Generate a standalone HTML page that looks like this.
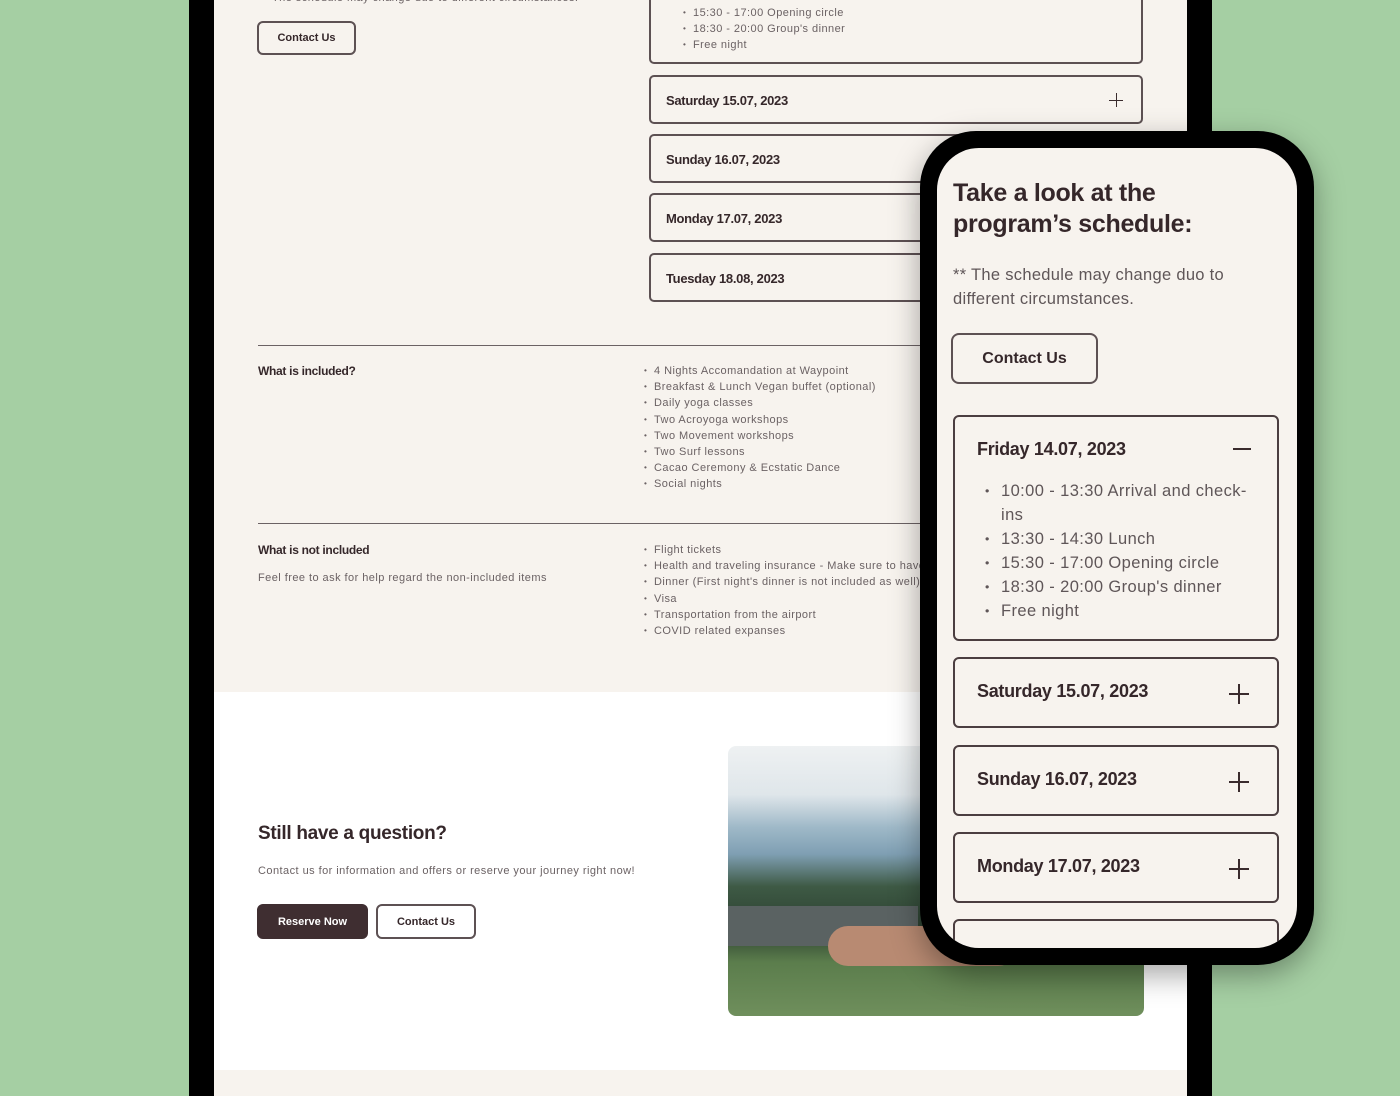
<!DOCTYPE html>
<html><head><meta charset="utf-8"><style>
*{margin:0;padding:0;box-sizing:border-box}
body{width:1400px;height:1096px;background:#a5cfa3;position:relative;overflow:hidden;font-family:"Liberation Sans",sans-serif;color:#3a2b2d}
.a{position:absolute}
.b{font-weight:bold;letter-spacing:-0.3px;color:#35272a}
.t{color:#6b6264;font-size:11px;letter-spacing:0.45px}
.acc{position:absolute;border:2px solid #5d5153;border-radius:5px;background:#f7f3ee}
.acc .b{position:absolute;left:15px;font-size:13px}
.plus{position:absolute;width:14px;height:14px}
.plus:before,.plus:after{content:"";position:absolute;background:#3a2b2d}
.plus:before{left:0;right:0;top:6.5px;height:1.4px}
.plus:after{top:0;bottom:0;left:6.5px;width:1.4px}
ul{list-style:none}
li{position:relative;padding-left:10px}
li:before{content:"•";position:absolute;left:0;font-size:0.75em}
.btn{position:absolute;border:2px solid #5d5153;border-radius:6px;font-weight:bold;font-size:11px;display:flex;align-items:center;justify-content:center;color:#35272a}
.macc{position:absolute;left:16px;width:326px;border:2px solid #4b3e40;border-radius:6px;height:71px}
.macc .b{position:absolute;left:22px;top:22px;font-size:18px}
.macc .plus{width:20px;height:20px;right:28px;top:25px}
.macc .plus:before{top:9px;height:2px}
.macc .plus:after{left:9px;width:2px}
</style></head><body>
<div class="a" style="left:189px;top:0;width:1023px;height:1096px;background:#000"></div>
<div class="a" style="left:214px;top:0;width:973px;height:692px;background:#f7f3ee"></div>
<div class="a" style="left:214px;top:692px;width:973px;height:378px;background:#fff"></div>
<div class="a" style="left:214px;top:1070px;width:973px;height:26px;background:#f7f3ee"></div>

<div class="a t" style="left:272px;top:-8px">The schedule may change duo to different circumstances.</div>
<div class="btn" style="left:257px;top:21px;width:99px;height:34px">Contact Us</div>

<div class="acc" style="left:649px;top:-10px;width:494px;height:74px">
<ul class="t" style="position:absolute;left:32px;top:13px;line-height:16px"><li>15:30 - 17:00 Opening circle</li><li>18:30 - 20:00 Group's dinner</li><li>Free night</li></ul></div>
<div class="acc" style="left:649px;top:75px;width:494px;height:49px"><div class="b" style="top:16px">Saturday 15.07, 2023</div><div class="plus" style="right:18px;top:16px"></div></div>
<div class="acc" style="left:649px;top:134px;width:494px;height:49px"><div class="b" style="top:16px">Sunday 16.07, 2023</div></div>
<div class="acc" style="left:649px;top:193px;width:494px;height:49px"><div class="b" style="top:16px">Monday 17.07, 2023</div></div>
<div class="acc" style="left:649px;top:253px;width:494px;height:49px"><div class="b" style="top:16px">Tuesday 18.08, 2023</div></div>

<div class="a" style="left:258px;top:345px;width:885px;height:1px;background:#6b6264"></div>
<div class="a b" style="left:258px;top:364px;font-size:12px">What is included?</div>
<ul class="a t" style="left:644px;top:363px;line-height:16.2px"><li>4 Nights Accomandation at Waypoint</li><li>Breakfast &amp; Lunch Vegan buffet (optional)</li><li>Daily yoga classes</li><li>Two Acroyoga workshops</li><li>Two Movement workshops</li><li>Two Surf lessons</li><li>Cacao Ceremony &amp; Ecstatic Dance</li><li>Social nights</li></ul>
<div class="a" style="left:258px;top:523px;width:885px;height:1px;background:#6b6264"></div>
<div class="a b" style="left:258px;top:543px;font-size:12px">What is not included</div>
<div class="a t" style="left:258px;top:572px">Feel free to ask for help regard the non-included items</div>
<ul class="a t" style="left:644px;top:542px;line-height:16.2px;white-space:nowrap"><li>Flight tickets</li><li>Health and traveling insurance - Make sure to have</li><li>Dinner (First night's dinner is not included as well)</li><li>Visa</li><li>Transportation from the airport</li><li>COVID related expanses</li></ul>

<div class="a b" style="left:258px;top:823px;font-size:19px">Still have a question?</div>
<div class="a t" style="left:258px;top:865px">Contact us for information and offers or reserve your journey right now!</div>
<div class="btn" style="left:257px;top:904px;width:111px;height:35px;background:#3f2e31;border-color:#3f2e31;color:#fff">Reserve Now</div>
<div class="btn" style="left:376px;top:904px;width:100px;height:35px">Contact Us</div>

<div class="a" style="left:728px;top:746px;width:416px;height:270px;border-radius:8px;overflow:hidden;background:linear-gradient(#eef1f2 0%,#dfe6ea 18%,#9fb9c8 30%,#7f9fb3 40%,#3e5a45 52%,#2c4030 68%,#5b7d4c 80%,#6f8f5c 100%)">
<div class="a" style="left:0;top:160px;width:190px;height:40px;background:#5a6262"></div>
<div class="a" style="left:100px;top:180px;width:190px;height:40px;background:#b88a72;border-radius:25px"></div>
</div>

<div class="a" style="left:920px;top:131px;width:394px;height:834px;background:#000;border-radius:56px;box-shadow:0 10px 30px rgba(0,0,0,.35)"></div>
<div class="a" style="left:937px;top:148px;width:360px;height:800px;background:#f7f3ee;border-radius:42px;overflow:hidden">
<div class="a b" style="left:16px;top:30px;font-size:25px;line-height:31px">Take a look at the<br>program’s schedule:</div>
<div class="a" style="left:16px;top:115px;font-size:16.5px;line-height:24px;color:#5f5658;letter-spacing:0.3px">** The schedule may change duo to<br>different circumstances.</div>
<div class="btn" style="left:14px;top:185px;width:147px;height:51px;font-size:16px;border-width:2.5px;border-radius:8px">Contact Us</div>
<div class="macc" style="top:267px;height:226px"><div class="b">Friday 14.07, 2023</div><div class="a" style="right:26px;top:31px;width:18px;height:2px;background:#3a2b2d"></div>
<ul class="a" style="left:30px;top:62px;font-size:16.5px;line-height:24px;color:#5f5658;width:272px;letter-spacing:0.4px"><li style="padding-left:16px">10:00 - 13:30 Arrival and check-ins</li><li style="padding-left:16px">13:30 - 14:30 Lunch</li><li style="padding-left:16px">15:30 - 17:00 Opening circle</li><li style="padding-left:16px">18:30 - 20:00 Group's dinner</li><li style="padding-left:16px">Free night</li></ul></div>
<div class="macc" style="top:509px"><div class="b">Saturday 15.07, 2023</div><div class="plus"></div></div>
<div class="macc" style="top:597px"><div class="b">Sunday 16.07, 2023</div><div class="plus"></div></div>
<div class="macc" style="top:684px"><div class="b">Monday 17.07, 2023</div><div class="plus"></div></div>
<div class="macc" style="top:771px"></div>
</div>
</body></html>
